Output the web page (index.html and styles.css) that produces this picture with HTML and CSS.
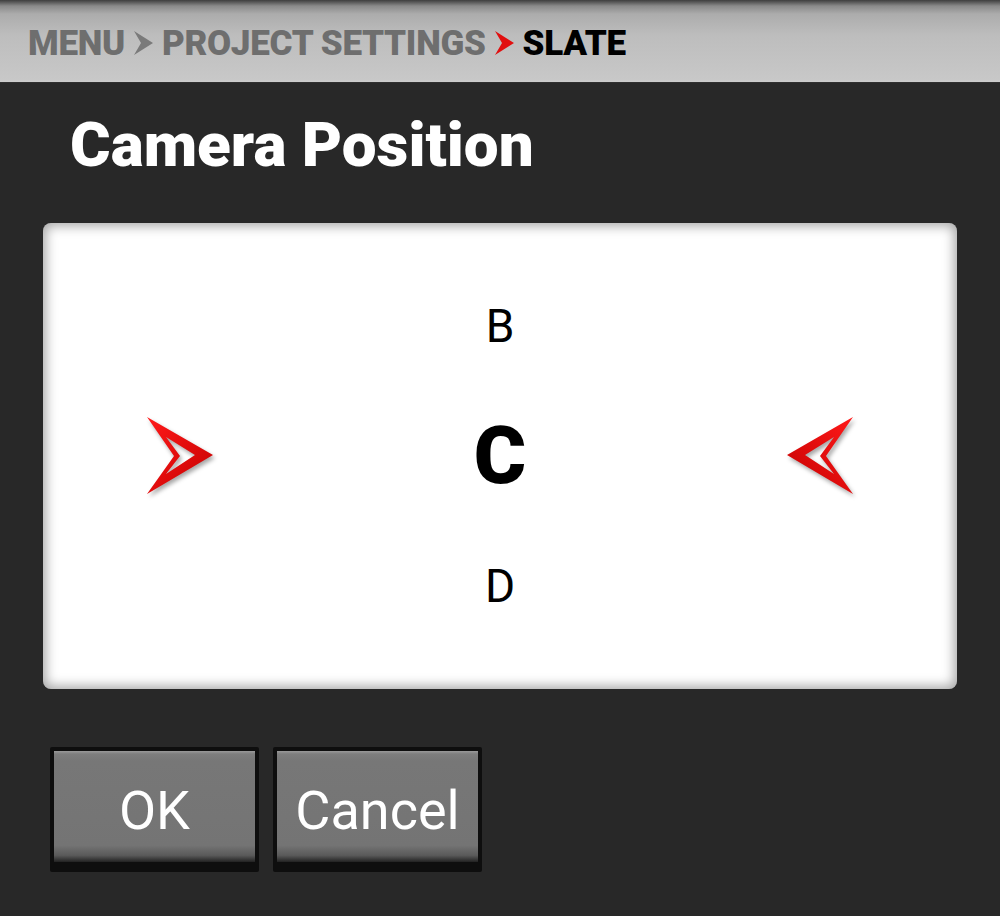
FILE: index.html
```html
<!DOCTYPE html>
<html>
<head>
<meta charset="utf-8">
<link rel="stylesheet" href="styles.css">
</head>
<body>
<header class="crumbs">
  <span class="crumb">MENU</span>
  <svg class="chev" viewBox="0 0 19 24" width="19" height="24"><polygon points="0,0 19,12 0,24 7,12" fill="#7a7a7a"/></svg>
  <span class="crumb">PROJECT SETTINGS</span>
  <svg class="chev" viewBox="0 0 19 24" width="19" height="24"><polygon points="0,0 19,12 0,24 7,12" fill="#e10f0f"/></svg>
  <span class="crumb current">SLATE</span>
</header>
<h1 class="title">Camera Position</h1>
<section class="panel">
  <svg class="arrow" viewBox="0 0 66 78" width="66" height="78">
    <defs>
      <linearGradient id="rg" x1="0" y1="0" x2="1" y2="1">
        <stop offset="0" stop-color="#ff1a1a"/>
        <stop offset="1" stop-color="#c40000"/>
      </linearGradient>
    </defs>
    <path fill="url(#rg)" fill-rule="evenodd" d="M0 0 L66 38 L0 77 L27 39 Z M19 20 L48 38 L19 57 L33 39 Z"/>
  </svg>
  <div class="letters">
    <div class="letter">B</div>
    <div class="letter big">C</div>
    <div class="letter">D</div>
  </div>
  <svg class="arrow flip" viewBox="0 0 66 78" width="66" height="78">
    <path fill="url(#rg)" fill-rule="evenodd" d="M0 0 L66 38 L0 77 L27 39 Z M19 20 L48 38 L19 57 L33 39 Z"/>
  </svg>
</section>
<div class="buttons">
  <button class="btn"><span class="face">OK</span></button>
  <button class="btn"><span class="face">Cancel</span></button>
</div>
</body>
</html>
```
FILE: styles.css
```css
html, body {
  margin: 0;
  padding: 0;
}
body {
  width: 1000px;
  height: 916px;
  background: #282828;
  font-family: Roboto, "Liberation Sans", sans-serif;
  overflow: hidden;
}
.crumbs {
  height: 83px;
  box-sizing: border-box;
  padding: 5px 0 0 28px;
  display: flex;
  align-items: center;
  gap: 9px;
  background: linear-gradient(#3e3e3e 0px, #8a8a8a 6px, #acacac 14px, #bdbdbd 35px, #c8c8c8 80px, #d0d0d0 83px);
  border-bottom: 1px solid #303030;
}
.crumb {
  font-size: 35px;
  font-weight: 900;
  color: #6e6e6e;
  line-height: 1;
  letter-spacing: -0.3px;
}
.crumb.current {
  color: #000;
}
.chev {
  display: block;
  flex: none;
  margin-top: -1px;
}
.title {
  margin: 30px 0 0 70px;
  font-size: 62px;
  line-height: 64px;
  font-weight: 900;
  color: #fff;
}
.panel {
  margin: 46px 0 0 43px;
  width: 914px;
  height: 466px;
  box-sizing: border-box;
  background: #fff;
  border-radius: 8px;
  box-shadow: inset 0 0 12px 3px rgba(0, 0, 0, 0.35);
  display: flex;
  align-items: center;
  justify-content: space-between;
  padding: 0 104px;
}
.arrow {
  display: block;
  filter: drop-shadow(2px 3px 2px rgba(0, 0, 0, 0.35));
}
.arrow.flip {
  transform: scaleX(-1);
  filter: drop-shadow(-2px 3px 2px rgba(0, 0, 0, 0.35));
}
.letters {
  display: flex;
  flex-direction: column;
  align-items: center;
}
.letter {
  height: 130px;
  display: flex;
  align-items: center;
  justify-content: center;
  font-size: 46px;
  color: #000;
  line-height: 1;
}
.letter.big {
  font-size: 80px;
  font-weight: 900;
}
.buttons {
  display: flex;
  gap: 14px;
  margin: 58px 0 0 50px;
}
.btn {
  width: 209px;
  height: 125px;
  padding: 4px 4px 10px 4px;
  box-sizing: border-box;
  border: 0;
  background: #0e0e0e;
  border-radius: 2px;
  display: flex;
}
.face {
  flex: 1;
  display: flex;
  align-items: center;
  justify-content: center;
  padding-top: 9px;
  box-sizing: border-box;
  background: linear-gradient(#9a9a9a 0px, #7e7e7e 3px, #777 10px, #747474 85%, #5a5a5a 94%, #222 100%);
  color: #fff;
  font-family: Roboto, "Liberation Sans", sans-serif;
  font-size: 54px;
  line-height: 1;
}
```
